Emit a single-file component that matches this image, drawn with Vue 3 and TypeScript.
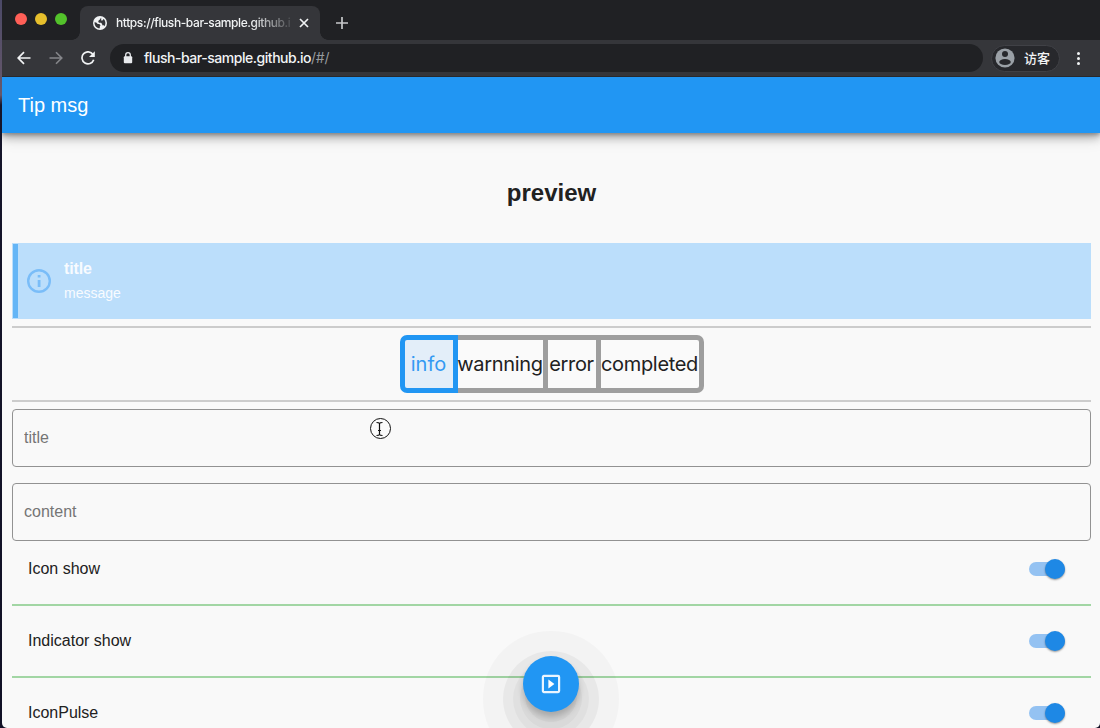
<script setup lang="ts">
import { ref } from 'vue'

interface Segment { label: string; width: number }

const segments: Segment[] = [
  { label: 'info', width: 58 },
  { label: 'warnning', width: 90 },
  { label: 'error', width: 53 },
  { label: 'completed', width: 103 },
]
const selected = ref('info')
const fields = ['title', 'content']
const settings = ref([
  { label: 'Icon show', on: true },
  { label: 'Indicator show', on: true },
  { label: 'IconPulse', on: true },
])
</script>

<template>
  <div class="desktop">
    <div class="window">
      <header class="tabs">
        <div class="lights"><i class="red"></i><i class="yellow"></i><i class="green"></i></div>
        <div class="tab">
          <svg class="globe" width="14" height="14" viewBox="0 0 14 14">
            <circle cx="7" cy="7" r="7" fill="#f1f3f4" />
            <path d="M1.5 6.2 L3.2 6.5 4.7 8.1 H6.3 L7.5 9.3 6.8 10.5 V12.2 C4 12.4 1.4 10 1.5 6.2Z M8.2 1.7 C6.8 2.7 7.5 3.6 5.8 4.3 L5.2 5.7 L6 6.7 H8 L9.2 8 V9.2 H10.7 L11.4 10.2 C13.2 7.6 12.4 4.4 10.5 3 L9.5 4.5 H8.2Z" fill="#35363a" />
          </svg>
          <span class="tab-title">https://flush-bar-sample.github.io</span>
          <svg class="close" width="10" height="10" viewBox="0 0 10 10"><path d="M1 1 9 9M9 1 1 9" stroke="#f1f3f4" stroke-width="1.7" /></svg>
        </div>
        <svg class="plus" width="12" height="12" viewBox="0 0 12 12"><path d="M6 0V12M0 6H12" stroke="#c6c8ca" stroke-width="1.7" /></svg>
      </header>

      <div class="toolbar">
        <svg class="back" width="14" height="14" viewBox="0 0 14 14" fill="none" stroke="#f1f3f4" stroke-width="1.7"><path d="M13.5 7H1.5M7 1.2 1.2 7 7 12.8" /></svg>
        <svg class="forward" width="14" height="14" viewBox="0 0 14 14" fill="none" stroke="#85868a" stroke-width="1.6"><path d="M.5 7H12.5M7 1.2 12.8 7 7 12.8" /></svg>
        <svg class="reload" width="14" height="14" viewBox="0 0 14 14"><path d="M12 3.5A6 6 0 1 0 12.7 8.7" fill="none" stroke="#f1f3f4" stroke-width="1.7" /><path d="M13.8 .2V6H8Z" fill="#f1f3f4" /></svg>
        <div class="address">
          <svg width="10" height="12" viewBox="0 0 10 12"><path d="M2.7 5V3a2.3 2.3 0 0 1 4.6 0V5" fill="none" stroke="#e8eaed" stroke-width="1.3" /><rect x=".8" y="4.3" width="8.4" height="7" rx="1" fill="#e8eaed" /></svg>
          <span>flush-bar-sample.github.io<em>/#/</em></span>
        </div>
        <div class="guest">
          <svg width="20" height="20" viewBox="0 0 20 20"><circle cx="10" cy="10" r="9.6" fill="#9aa0a6" /><circle cx="10" cy="6" r="3" fill="#27282c" /><ellipse cx="10" cy="14" rx="5.8" ry="3" fill="#27282c" /></svg>
          <span>访客</span>
        </div>
        <div class="dots"><i></i><i></i><i></i></div>
      </div>

      <main class="page">
        <div class="app-bar"><span>Tip msg</span></div>
        <div class="content">
          <h1><span>preview</span></h1>
          <section class="flush">
            <svg width="24" height="24" viewBox="0 0 24 24"><circle cx="12" cy="12" r="10.8" fill="none" stroke="#7abdf8" stroke-width="2.4" /><path d="M10.7 6h2.8v2.6h-2.8zM10.7 11h2.8v7h-2.8z" fill="#7abdf8" /></svg>
            <div class="flush-text"><b>title</b><span>message</span></div>
          </section>
          <div class="rule first"></div>
          <div class="segments">
            <button
              v-for="item in segments"
              :key="item.label"
              :class="{ active: selected === item.label }"
              :style="{ width: item.width + 'px' }"
              @click="selected = item.label"
            ><span>{{ item.label }}</span></button>
          </div>
          <div class="rule"></div>
          <input v-for="field in fields" :key="field" type="text" :placeholder="field" />
          <div v-for="item in settings" :key="item.label" class="setting" @click="item.on = !item.on">
            <span>{{ item.label }}</span>
            <span class="switch" :class="{ off: !item.on }"><i></i></span>
          </div>
        </div>
        <button class="fab" aria-label="Show message">
          <svg width="20" height="20" viewBox="0 0 20 20"><rect x="1.9" y="1.9" width="16.2" height="16.2" rx="1" fill="none" stroke="#eaf5ff" stroke-width="2.2" /><path d="M7.4 5.6 13.4 10 7.4 14.4Z" fill="#fff" /></svg>
        </button>
      </main>
    </div>
    <svg class="pointer" width="23" height="23" viewBox="0 0 23 23">
      <circle cx="11.5" cy="11.5" r="10" fill="#fbfbfb" stroke="#111" stroke-width="1" />
      <path d="M7.5 5.5Q10 5.5 10.5 6.5Q11 5.5 13.5 5.5M10.5 6.5V17.5M7.5 18.5Q10 18.5 10.5 17.5Q11 18.5 13.5 18.5M9 13.5H12" fill="none" stroke="#111" stroke-width="1.2" />
    </svg>
  </div>
</template>

<style>
html, body { margin: 0; overflow: hidden; }
</style>

<style scoped>
* { box-sizing: border-box; }
.desktop { position: relative; width: 1100px; height: 728px; padding-left: 2px; overflow: hidden; background: linear-gradient(#4b4967 0, #67586a 95px, #15152a 105px, #111126 100%); font-family: "Liberation Sans", "Noto Sans CJK SC", sans-serif; color: #212121; }
.window { height: 728px; overflow: hidden; border-radius: 0 0 5px 5px; background: #f9f9f9; }
.tabs { height: 40px; display: flex; background: #202124; }
.lights { display: flex; gap: 8px; padding: 13px 0 0 13px; width: 78px; }
.lights i { width: 12px; height: 12px; border-radius: 50%; }
.red { background: #ff5f57; }
.yellow { background: #e6bf2c; }
.green { background: #53c22b; }
.tab { position: relative; width: 240px; height: 34px; margin-top: 6px; padding: 0 11px 0 13px; border-radius: 8px 8px 0 0; background: #35363a; display: flex; align-items: center; }
.tab::before, .tab::after { content: ""; position: absolute; bottom: 0; width: 8px; height: 8px; }
.tab::before { left: -8px; background: radial-gradient(circle at 0 0, transparent 7.5px, #35363a 8px); }
.tab::after { right: -8px; background: radial-gradient(circle at 100% 0, transparent 7.5px, #35363a 8px); }
.tab-title { width: 175px; margin-left: 9px; overflow: hidden; white-space: nowrap; font: 500 12px/18px Inter, sans-serif; letter-spacing: -.4px; color: #f1f3f4; -webkit-mask-image: linear-gradient(90deg, #000 135px, transparent 180px); }
.close { margin-left: 8px; flex: none; }
.plus { margin: 17px 0 0 16px; }
.toolbar { height: 37px; display: flex; align-items: center; background: #35363a; border-bottom: 1px solid #29292c; padding-left: 15px; }
.forward { margin-left: 18px; }
.reload { margin-left: 18px; }
.address { width: 873px; height: 28px; margin-left: 15px; padding-left: 13px; border-radius: 14px; background: #202124; display: flex; align-items: center; color: #f1f3f4; font: 500 14px/20px Inter, sans-serif; letter-spacing: -.46px; }
.address span { margin-left: 11px; white-space: nowrap; }
.address em { font-style: normal; font-weight: 400; color: #969a9e; letter-spacing: -.3px; }
.guest { width: 69px; height: 27px; margin-left: 8px; padding-left: 3px; border: 1px solid #404146; border-radius: 14px; background: #27282c; display: flex; align-items: center; color: #f1f3f4; font: 500 13px/20px "Noto Sans CJK SC", sans-serif; }
.guest span { margin-left: 9px; white-space: nowrap; }
.dots { margin-left: 17px; display: flex; flex-direction: column; gap: 2px; }
.dots i { width: 3px; height: 3px; border-radius: 50%; background: #f1f3f4; }
.page { position: relative; height: 651px; overflow: hidden; }
.app-bar { position: relative; height: 56px; padding: 0 16px; background: #2196f3; color: #fff; font-size: 20px; line-height: 56px; box-shadow: 0 2px 4px #0004, 0 5px 8px #0003, 0 6px 14px #0002; }
.content { padding: 0 9px 0 10px; }
h1 { height: 110px; margin: 0; text-align: center; font-size: 24px; line-height: 119px; }
.flush { height: 76px; border: 1px solid #bbdefb; border-left: 0; background: linear-gradient(90deg, #bbdefb 1px, #64b5f6 1px, #64b5f6 6px, #bbdefb 6px); display: flex; align-items: center; padding-left: 15px; color: #f8fbff; }
.flush-text { display: flex; flex-direction: column; margin-left: 13px; font-size: 14px; line-height: 24px; }
.flush-text b { font-size: 16px; letter-spacing: -.15px; }
.rule { height: 2px; background: #ccc; }
.first { margin-top: 7px; }
.segments { height: 58px; margin: 7px auto; width: 304px; display: flex; }
.segments button { height: 58px; padding: 0; border: 5px solid #9e9e9e; border-left: 0; background: #fafafa; color: #212121; font: 20px/48px Inter, sans-serif; letter-spacing: -.32px; display: flex; justify-content: center; white-space: nowrap; }
.segments button:first-child { border-left: 5px solid #9e9e9e; border-radius: 7px 0 0 7px; }
.segments button:last-child { border-radius: 0 7px 7px 0; }
.segments button.active { background: #e3eef9; border-color: #2196f3; color: #349af3; letter-spacing: 0; }
input { display: block; width: 100%; height: 58px; margin: 7px 0 16px; padding: 0 11px; border: 1px solid #929292; border-radius: 4px; background: #f9f9f9; outline: 0; color: #212121; font: 16px "Liberation Sans", sans-serif; }
input + input { margin: 0; }
input::placeholder { color: #757575; opacity: 1; }
.setting { height: 72px; padding: 0 26px 0 16px; border-bottom: 2px solid #a2d6a4; display: flex; align-items: center; justify-content: space-between; font-size: 16px; }
input + .setting { height: 65px; padding-bottom: 8px; }
.switch { position: relative; width: 36px; height: 14px; border-radius: 7px; background: #94c2f2; }
input + .setting .switch { margin-top: 1px; }
.switch i { position: absolute; right: 0; top: -3px; width: 20px; height: 20px; border-radius: 50%; background: #1e88e5; box-shadow: 0 1px 2px #0006; }
.switch.off { background: #bbb; }
.switch.off i { right: 16px; background: #fff; }
.fab { position: absolute; left: 521.4px; top: 579px; width: 56px; height: 56px; border: 0; border-radius: 50%; padding: 0; display: grid; place-items: center; background: #2196f3; box-shadow: 0 5px 6px #0003, 0 12px 0 -2px #00000008, 0 14px 0 3px #00000008, 0 15px 0 10px #00000008, 0 15px 0 20px #0000000b, 0 15px 0 40px #00000006; }
.pointer { position: absolute; left: 369px; top: 417px; }
</style>
